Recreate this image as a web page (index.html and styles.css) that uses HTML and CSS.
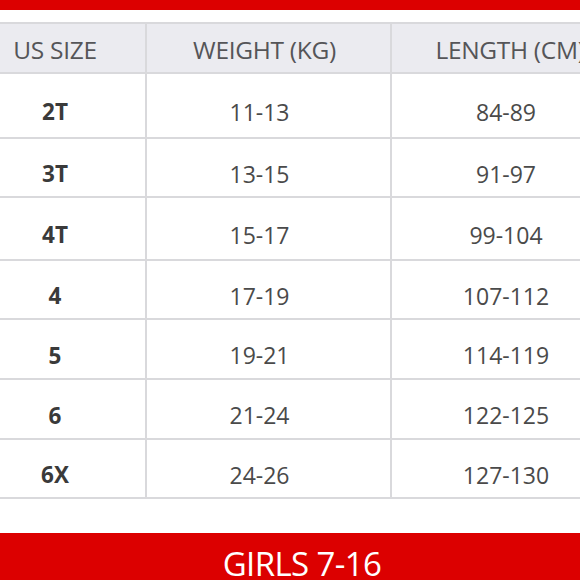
FILE: index.html
```html
<!DOCTYPE html>
<html>
<head>
<meta charset="utf-8">
<link rel="stylesheet" href="styles.css">
</head>
<body>
<div class="page">
  <div class="top-bar"></div>
  <div class="table-wrap">
    <div class="table">
      <div class="cell head">US SIZE</div>
      <div class="cell head mid">WEIGHT (KG)</div>
      <div class="cell head last">LENGTH (CM)</div>

      <div class="cell size">2T</div><div class="cell mid">11-13</div><div class="cell">84-89</div>
      <div class="cell size">3T</div><div class="cell mid">13-15</div><div class="cell">91-97</div>
      <div class="cell size">4T</div><div class="cell mid">15-17</div><div class="cell">99-104</div>
      <div class="cell size">4</div><div class="cell mid">17-19</div><div class="cell">107-112</div>
      <div class="cell size">5</div><div class="cell mid">19-21</div><div class="cell">114-119</div>
      <div class="cell size">6</div><div class="cell mid">21-24</div><div class="cell">122-125</div>
      <div class="cell size">6X</div><div class="cell mid">24-26</div><div class="cell">127-130</div>
    </div>
  </div>
  <div class="section-bar">GIRLS 7-16</div>
</div>
</body>
</html>
```

FILE: styles.css
```css
html, body {
  margin: 0;
  padding: 0;
  background: #ffffff;
}

.page {
  width: 580px;
  height: 580px;
  overflow: hidden;
  display: flex;
  flex-direction: column;
  font-family: "Open Sans", "Liberation Sans", sans-serif;
}

.top-bar {
  height: 10px;
  background: #dc0000;
  flex: none;
}

.table-wrap {
  margin-top: 12px;
  overflow: hidden;
  flex: none;
}

.table {
  display: grid;
  grid-template-columns: 182px 245px 230px;
  grid-template-rows: 50px 65px 59px 63px 59px 60px 60px 59px;
  margin-left: -37px;
  width: 657px;
  border-top: 2px solid #d9d9dc;
  border-left: 2px solid #d9d9dc;
}

.cell {
  display: flex;
  align-items: center;
  justify-content: center;
  border-right: 2px solid #d9d9dc;
  border-bottom: 2px solid #d9d9dc;
  font-size: 23px;
  color: #4a4a4a;
  white-space: nowrap;
  padding-top: 12px;
  box-sizing: border-box;
}

.mid {
  padding-right: 18px;
}

.head {
  background: #ebebf0;
  color: #555558;
  font-size: 24.5px;
  letter-spacing: -0.3px;
  padding-top: 3px;
}

.head.mid {
  padding-right: 8px;
}

.head.last {
  padding-left: 8px;
}

.size {
  font-weight: 700;
  font-size: 22.5px;
  color: #3a3a3a;
}

.section-bar {
  margin-top: 34px;
  height: 60px;
  flex: none;
  background: #dc0000;
  color: #ffffff;
  font-size: 33px;
  letter-spacing: -0.6px;
  line-height: 44px;
  padding-top: 9px;
  box-sizing: border-box;
  text-align: center;
  padding-left: 24px;
}
```
